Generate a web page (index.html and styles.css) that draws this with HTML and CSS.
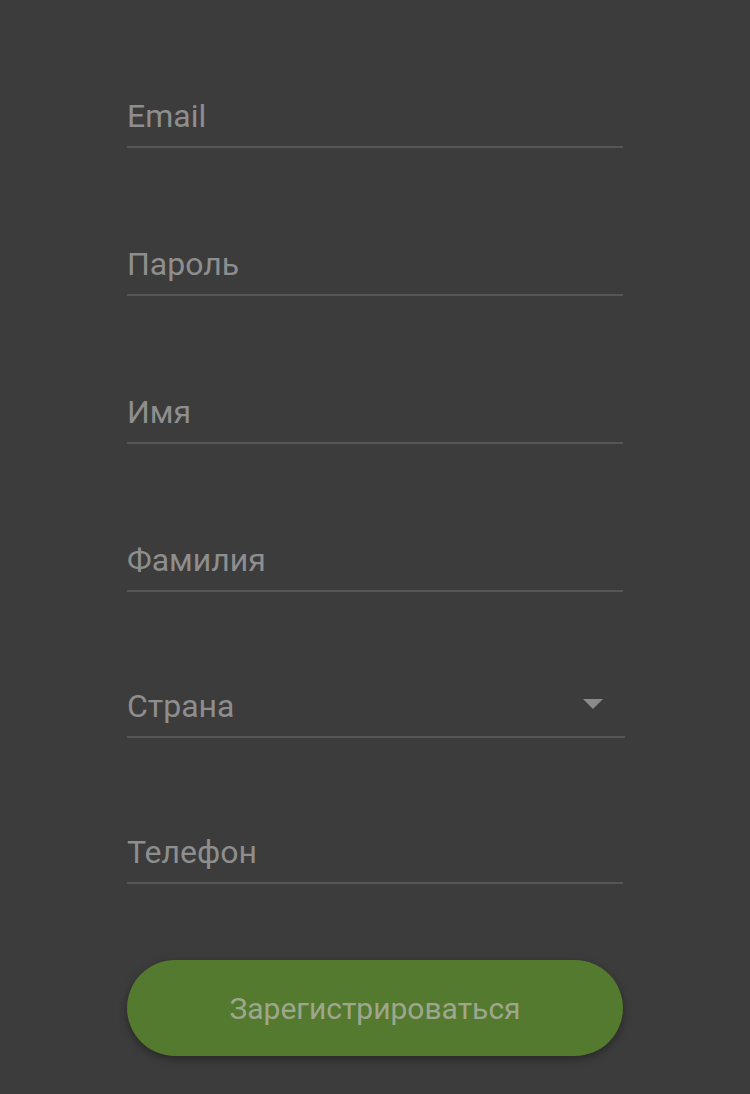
FILE: index.html
```html
<!DOCTYPE html>
<html lang="ru">
<head>
<meta charset="utf-8">
<title>Регистрация</title>
<link rel="stylesheet" href="styles.css">
</head>
<body>
<form class="form">
  <div class="field"><span class="label">Email</span></div>
  <div class="field"><span class="label">Пароль</span></div>
  <div class="field"><span class="label">Имя</span></div>
  <div class="field field-before-select"><span class="label">Фамилия</span></div>
  <div class="field field-select">
    <span class="label">Страна</span>
    <svg class="caret" width="20" height="10" viewBox="0 0 20 10"><path d="M0 0 L20 0 L10 10 Z" fill="#8a8a8a"/></svg>
  </div>
  <div class="field field-last"><span class="label">Телефон</span></div>
  <button type="button" class="submit">Зарегистрироваться</button>
</form>
</body>
</html>
```
FILE: styles.css
```css
html, body {
  margin: 0;
  padding: 0;
  background: #3c3c3c;
  height: 100%;
}
body {
  font-family: Roboto, "Noto Sans", "Liberation Sans", sans-serif;
}
.form {
  display: flex;
  flex-direction: column;
  padding: 97px 0 0 127px;
  width: 498px;
}
.field {
  width: 496px;
  display: flex;
  align-items: flex-start;
  justify-content: space-between;
  padding-bottom: 10px;
  border-bottom: 2px solid #565656;
  margin-bottom: 97px;
}
.field-before-select {
  margin-bottom: 95px;
}
.field-select {
  width: 498px;
  margin-bottom: 95px;
}
.field-last {
  margin-bottom: 76px;
}
.label {
  font-size: 32px;
  line-height: 39px;
  color: #8e8e8e;
}
.caret {
  margin-top: 12px;
  margin-right: 22px;
}
.submit {
  width: 496px;
  height: 96px;
  border: none;
  border-radius: 48px;
  background: #537a2e;
  color: #a0a68e;
  font-family: Roboto, "Noto Sans", "Liberation Sans", sans-serif;
  font-size: 30px;
  padding: 0;
  box-shadow: 0 3px 8px rgba(0, 0, 0, 0.35);
  cursor: pointer;
}
```
